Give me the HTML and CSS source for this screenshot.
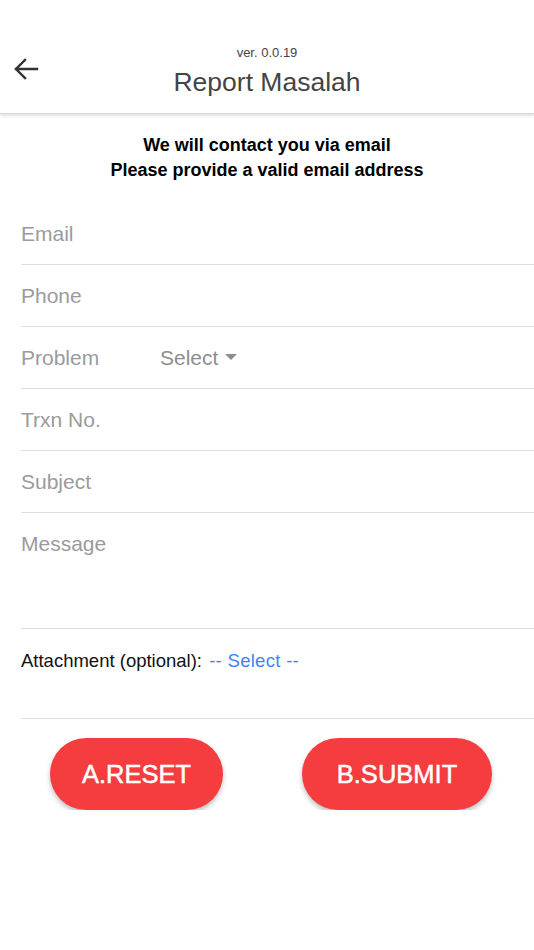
FILE: index.html
```html
<!DOCTYPE html>
<html lang="id">
<head>
<meta charset="utf-8">
<title>Report Masalah</title>
<link rel="stylesheet" href="styles.css">
</head>
<body>
<header class="topbar">
  <button class="back" aria-label="Back">
    <svg width="26" height="22" viewBox="0 0 26 22"><path d="M24 11H3M12 2L3 11L12 20" fill="none" stroke="#333" stroke-width="2.4" stroke-linecap="square"/></svg>
  </button>
  <div class="version">ver. 0.0.19</div>
  <h1 class="title">Report Masalah</h1>
</header>
<main>
  <p class="intro">We will contact you via email<br>Please provide a valid email address</p>
  <form class="form">
    <div class="row"><span class="label">Email</span></div>
    <div class="row"><span class="label">Phone</span></div>
    <div class="row"><span class="label">Problem</span><span class="select">Select <span class="caret"></span></span></div>
    <div class="row"><span class="label">Trxn No.</span></div>
    <div class="row"><span class="label">Subject</span></div>
    <div class="row message"><span class="label">Message</span></div>
    <div class="row attach"><span class="attach-label">Attachment (optional): <span class="link">-- Select --</span></span></div>
  </form>
  <div class="actions">
    <button class="btn reset">A.RESET</button>
    <button class="btn submit">B.SUBMIT</button>
  </div>
</main>
</body>
</html>
```
FILE: styles.css
```css
* { box-sizing: border-box; }
body {
  margin: 0;
  background: #fff;
  font-family: "Liberation Sans", Arial, sans-serif;
  color: #000;
}
.topbar {
  position: relative;
  height: 114px;
  padding-top: 45px;
  display: flex;
  flex-direction: column;
  align-items: center;
  border-bottom: 1px solid #d8d8d8;
  box-shadow: 0 2px 3px rgba(0,0,0,0.12);
}
.back {
  position: absolute;
  left: 13px;
  top: 58px;
  border: 0;
  background: none;
  padding: 0;
  line-height: 0;
}
.version {
  font-size: 13px;
  line-height: 16px;
  color: #444;
}
.title {
  margin: 5px 0 0;
  font-size: 26.5px;
  line-height: 32px;
  font-weight: normal;
  color: #444;
}
.intro {
  margin: 19px 0 20px;
  text-align: center;
  font-weight: bold;
  font-size: 18px;
  line-height: 25px;
}
.form {
  margin-left: 21px;
}
.row {
  height: 62px;
  border-bottom: 1px solid #dedede;
  display: flex;
  align-items: center;
}
.label {
  font-size: 21px;
  line-height: 24px;
  color: #9b9b9b;
  width: 139px;
}
.select {
  font-size: 21px;
  color: #8e8e8e;
  display: flex;
  align-items: center;
}
.caret {
  display: inline-block;
  margin-left: 7px;
  margin-top: -2px;
  border-left: 6px solid transparent;
  border-right: 6px solid transparent;
  border-top: 6px solid #8e8e8e;
}
.row.message {
  height: 116px;
  align-items: flex-start;
  padding-top: 19px;
}
.row.attach {
  height: 90px;
  align-items: flex-start;
  padding-top: 21px;
}
.attach-label {
  font-size: 18.5px;
  line-height: 22px;
  color: #111;
}
.link {
  color: #3a86f5;
  margin-left: 2px;
  letter-spacing: 0.3px;
}
.actions {
  display: flex;
  padding-left: 50px;
  gap: 79px;
  margin-top: 19px;
}
.btn {
  height: 72px;
  border: 0;
  border-radius: 36px;
  background: #f53c3f;
  color: #fff;
  font-family: "Liberation Sans", Arial, sans-serif;
  font-size: 25.5px;
  -webkit-text-stroke: 0.5px #fff;
  box-shadow: 0 3px 5px rgba(0,0,0,0.25);
}
.reset { width: 173px; }
.submit { width: 190px; }
```
